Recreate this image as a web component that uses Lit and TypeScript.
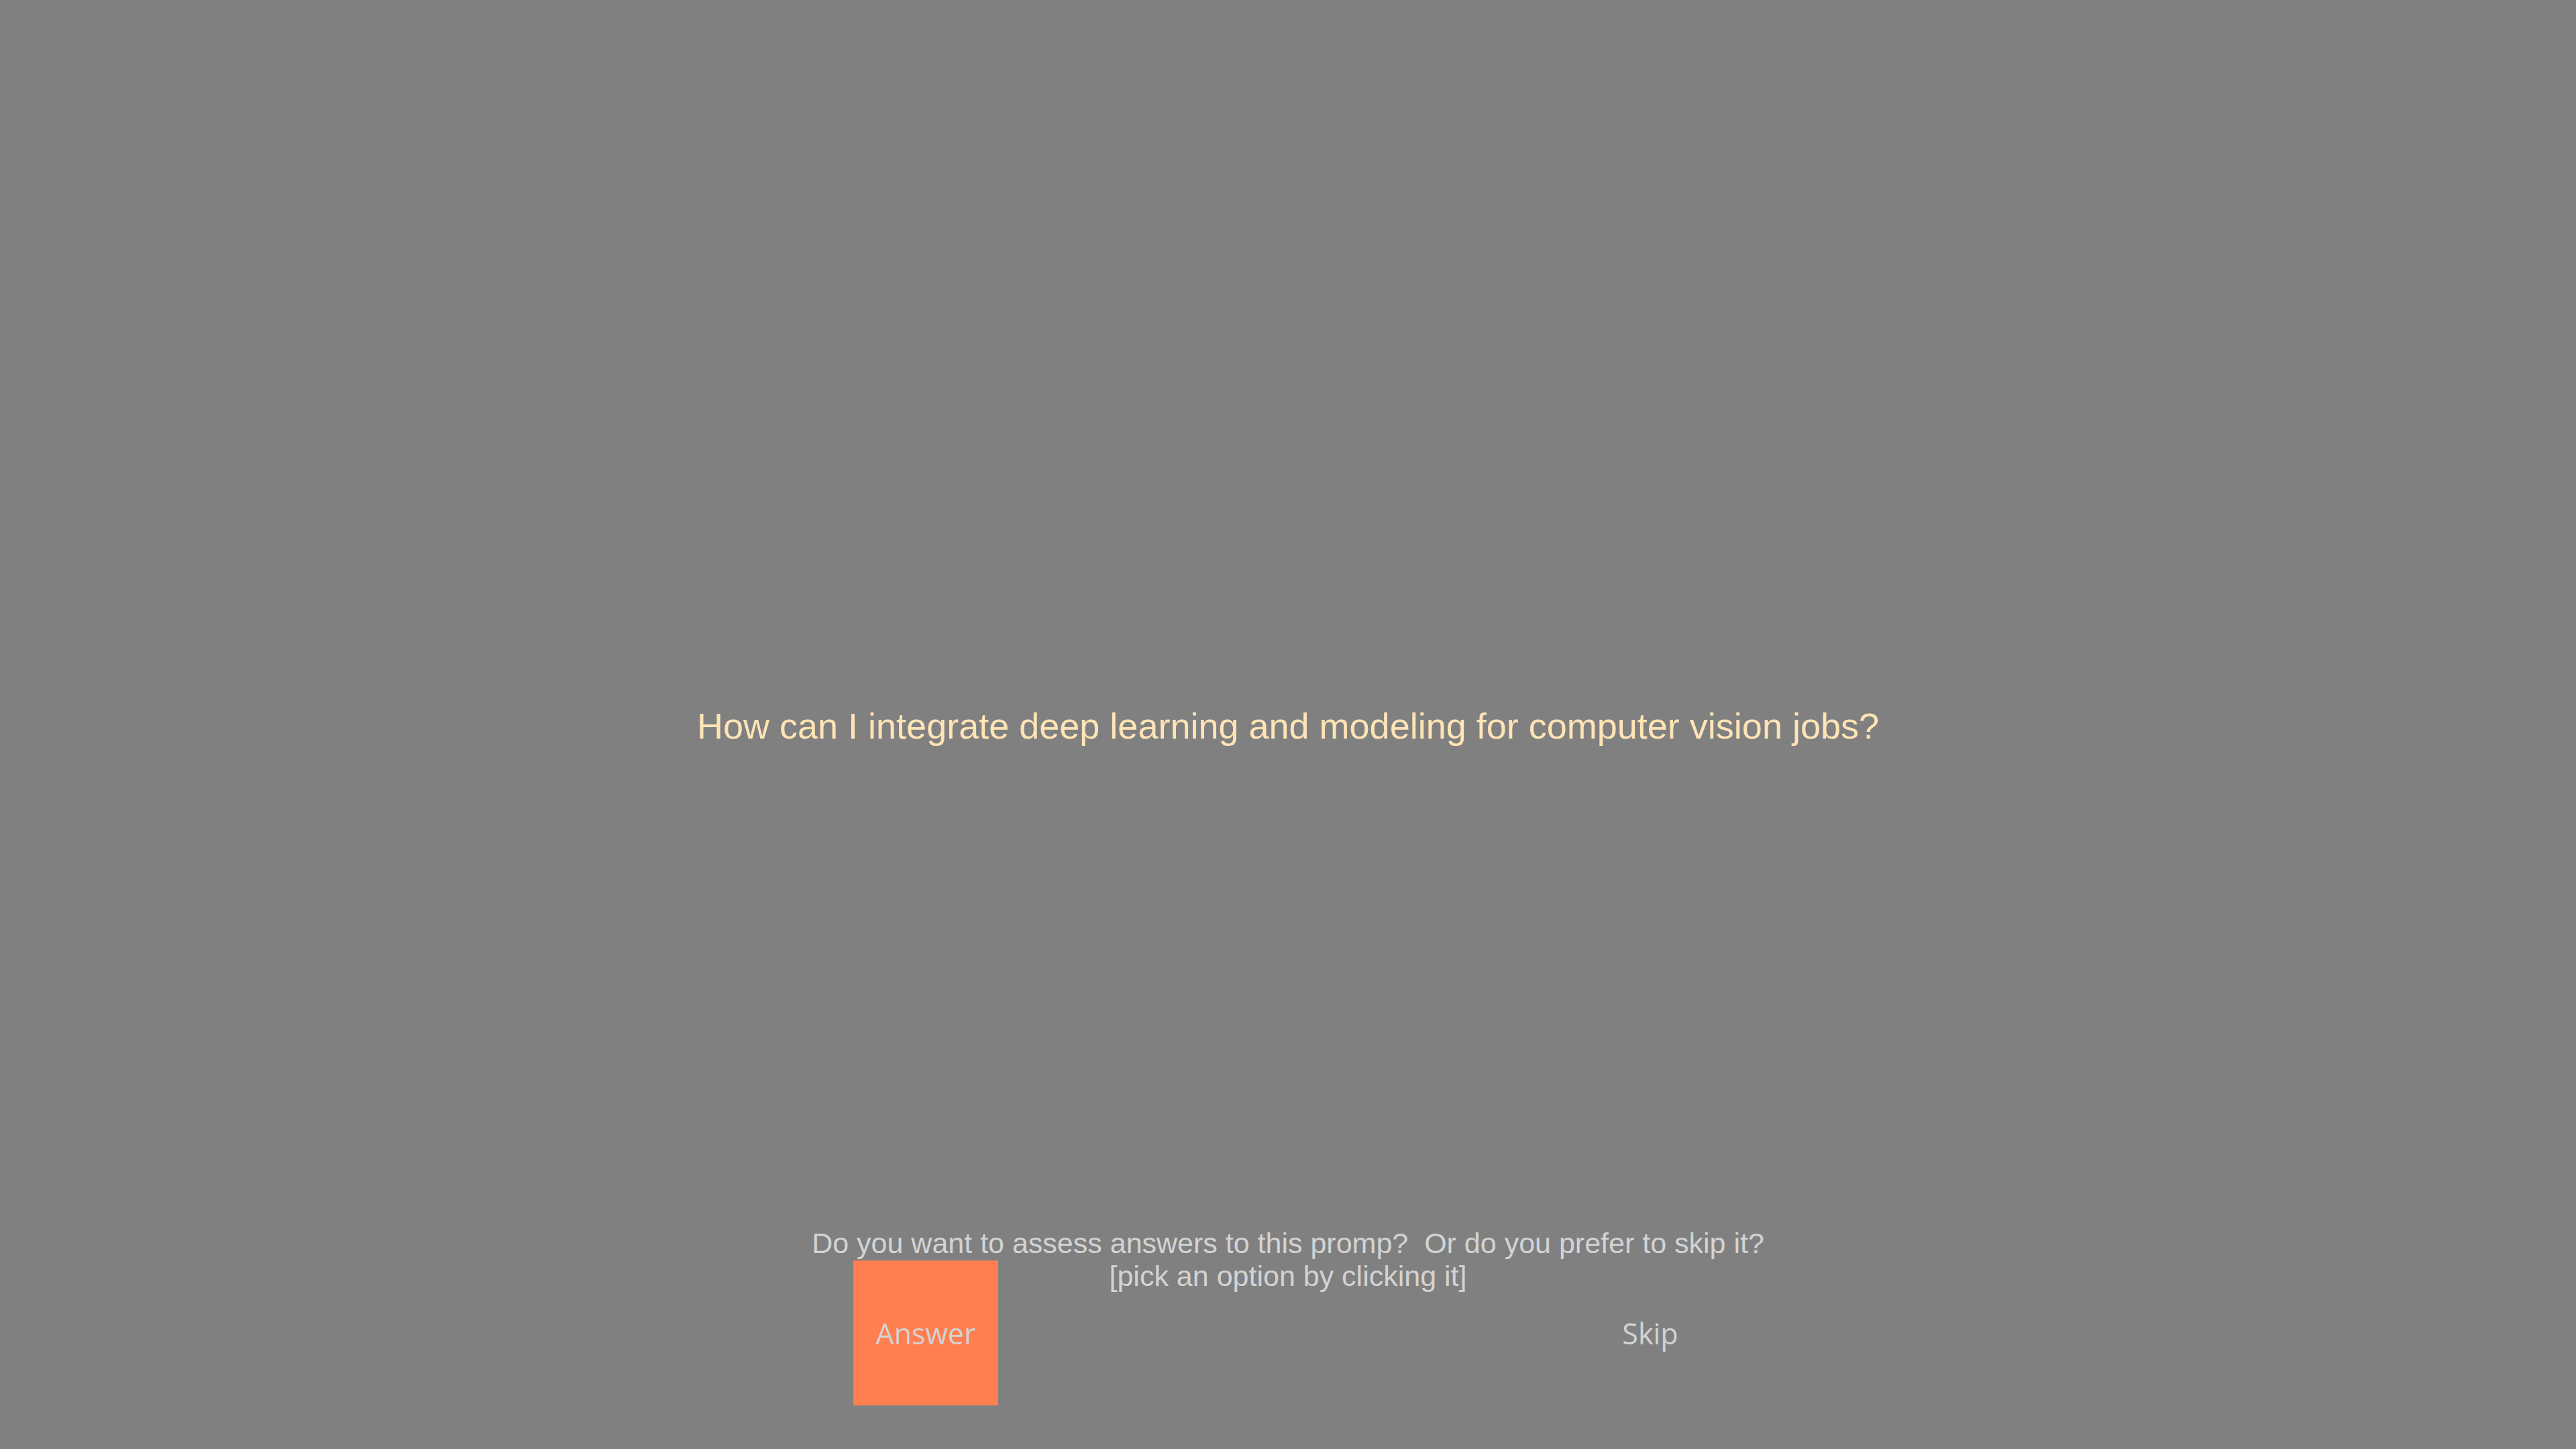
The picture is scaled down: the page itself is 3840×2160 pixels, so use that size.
import { LitElement, html, css } from "lit";
import { customElement } from "lit/decorators.js";

@customElement("app-root")
export class AppRoot extends LitElement {
  static styles = css`
    :host {
      display: block;
      font-family: "Liberation Sans", Arial, sans-serif;
    }
    .screen {
      box-sizing: border-box;
      min-height: 100vh;
      display: grid;
      grid-template-rows: 1fr auto 1fr;
      background: #808080;
      padding-top: 4px;
    }
    .prompt {
      grid-row: 2;
      margin: 0;
      text-align: center;
      font-size: 54px;
      line-height: 62px;
      font-weight: 400;
      color: #ffe4b5;
    }
    .choice {
      grid-row: 3;
      align-self: end;
      padding-bottom: 65px;
    }
    .instructions {
      margin: 0;
      text-align: center;
      font-size: 43px;
      line-height: 49px;
      color: #d3d3d3;
      white-space: pre-wrap;
    }
    .options {
      display: flex;
      justify-content: center;
      gap: 864px;
      margin-top: -48px;
    }
    .option {
      box-sizing: border-box;
      width: 216px;
      height: 216px;
      padding: 2px 0 0;
      border: 0;
      background: transparent;
      color: #d3d3d3;
      font-family: "Open Sans", sans-serif;
      font-size: 43px;
      line-height: 60px;
      cursor: pointer;
    }
    .primary {
      background: #ff7f50;
    }
  `;

  render() {
    return html`
      <main class="screen">
        <h1 class="prompt">How can I integrate deep learning and modeling for computer vision jobs?</h1>
        <section class="choice">
          <p class="instructions">Do you want to assess answers to this promp?  Or do you prefer to skip it?
[pick an option by clicking it]</p>
          <div class="options">
            <button class="option primary" type="button">Answer</button>
            <button class="option" type="button">Skip</button>
          </div>
        </section>
      </main>
    `;
  }
}
